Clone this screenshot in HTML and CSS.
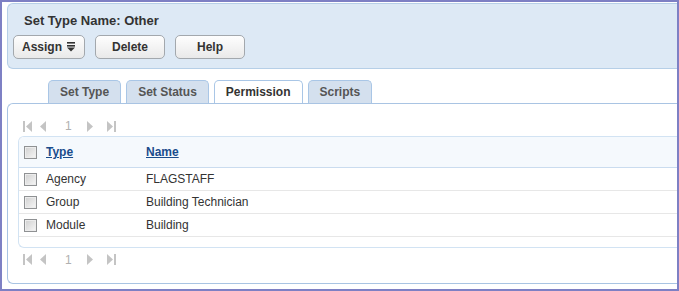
FILE: index.html
```html
<!DOCTYPE html>
<html lang="en">
<head>
    <meta charset="UTF-8">
    <title>Set Type - Permission</title>
    <link rel="stylesheet" href="styles.css">
</head>
<body>
    <div class="frame">
        <div class="header">
            <div class="title">Set Type Name: Other</div>
            <div class="actions">
                <button class="btn btn-menu">Assign
                    <svg width="8" height="10" viewBox="0 0 8 10"><rect x="0" y="0" width="8" height="1.6" fill="#333"/><rect x="0" y="3" width="8" height="1.6" fill="#333"/><polygon points="0,5.6 8,5.6 4,9.6" fill="#333"/></svg>
                </button>
                <button class="btn">Delete</button>
                <button class="btn">Help</button>
            </div>
        </div>

        <div class="tabs">
            <div class="tab">Set Type</div>
            <div class="tab">Set Status</div>
            <div class="tab active">Permission</div>
            <div class="tab">Scripts</div>
        </div>

        <div class="panel">
            <div class="pager">
                <svg class="pg-first" width="10" height="11" viewBox="0 0 10 11"><rect x="0" y="0" width="2" height="11" fill="#c4c4c4"/><polygon points="9,0 9,11 3,5.5" fill="#c4c4c4"/></svg>
                <svg class="pg-prev" width="8" height="11" viewBox="0 0 8 11"><polygon points="7,0 7,11 1,5.5" fill="#c4c4c4"/></svg>
                <span class="pg-num">1</span>
                <svg class="pg-next" width="8" height="11" viewBox="0 0 8 11"><polygon points="1,0 1,11 7,5.5" fill="#c4c4c4"/></svg>
                <svg class="pg-last" width="10" height="11" viewBox="0 0 10 11"><polygon points="1,0 1,11 7,5.5" fill="#c4c4c4"/><rect x="8" y="0" width="2" height="11" fill="#c4c4c4"/></svg>
            </div>

            <div class="grid">
                <div class="row head">
                    <div class="cell-check"><span class="check"></span></div>
                    <div class="cell-type"><a href="#">Type</a></div>
                    <div class="cell-name"><a href="#">Name</a></div>
                </div>
                <div class="row">
                    <div class="cell-check"><span class="check"></span></div>
                    <div class="cell-type">Agency</div>
                    <div class="cell-name">FLAGSTAFF</div>
                </div>
                <div class="row">
                    <div class="cell-check"><span class="check"></span></div>
                    <div class="cell-type">Group</div>
                    <div class="cell-name">Building Technician</div>
                </div>
                <div class="row">
                    <div class="cell-check"><span class="check"></span></div>
                    <div class="cell-type">Module</div>
                    <div class="cell-name">Building</div>
                </div>
                <div class="grid-foot"></div>
            </div>

            <div class="pager">
                <svg class="pg-first" width="10" height="11" viewBox="0 0 10 11"><rect x="0" y="0" width="2" height="11" fill="#c4c4c4"/><polygon points="9,0 9,11 3,5.5" fill="#c4c4c4"/></svg>
                <svg class="pg-prev" width="8" height="11" viewBox="0 0 8 11"><polygon points="7,0 7,11 1,5.5" fill="#c4c4c4"/></svg>
                <span class="pg-num">1</span>
                <svg class="pg-next" width="8" height="11" viewBox="0 0 8 11"><polygon points="1,0 1,11 7,5.5" fill="#c4c4c4"/></svg>
                <svg class="pg-last" width="10" height="11" viewBox="0 0 10 11"><polygon points="1,0 1,11 7,5.5" fill="#c4c4c4"/><rect x="8" y="0" width="2" height="11" fill="#c4c4c4"/></svg>
            </div>
        </div>
    </div>
</body>
</html>
```

FILE: styles.css
```css
body {
    margin: 0;
    font-family: "Liberation Sans", Arial, sans-serif;
    font-size: 12px;
    color: #333;
    background: #fff;
}
.frame {
    width: 679px;
    height: 291px;
    box-sizing: border-box;
    border: 2px solid #7e80c4;
    padding: 1px 0 0 5px;
    overflow: hidden;
    background: #fff;
}
.header {
    height: 66px;
    box-sizing: border-box;
    background: #dde9f5;
    border: 1px solid #b6cfe7;
    border-right: none;
    border-radius: 6px 0 0 6px;
    padding: 9px 0 0 5px;
}
.title {
    font-size: 13px;
    font-weight: bold;
    line-height: 16px;
    margin-left: 11px;
    color: #333;
}
.actions {
    display: flex;
    gap: 10px;
    margin-top: 6px;
}
.btn {
    height: 24px;
    width: 70px;
    box-sizing: border-box;
    border: 1px solid #a3a8ad;
    border-radius: 5px;
    background: linear-gradient(#fefefe, #e9e9e9);
    font-family: "Liberation Sans", Arial, sans-serif;
    font-size: 12px;
    font-weight: bold;
    color: #333;
    padding: 0;
    display: flex;
    align-items: center;
    justify-content: center;
}
.btn-menu {
    width: 72px;
    justify-content: flex-start;
    padding-left: 8px;
    gap: 5px;
}
.tabs {
    display: flex;
    gap: 5px;
    margin-top: 11px;
    padding-left: 41px;
}
.tab {
    height: 23px;
    box-sizing: border-box;
    line-height: 22px;
    padding: 0 11px;
    background: #d4e0ee;
    border: 1px solid #a9c6e6;
    border-bottom: none;
    border-radius: 5px 5px 0 0;
    font-weight: bold;
    color: #555;
}
.tab.active {
    background: #fff;
    color: #333;
}
.panel {
    height: 181px;
    box-sizing: border-box;
    border: 1px solid #a9c4e3;
    border-right: none;
    border-radius: 6px 0 0 6px;
    padding-left: 10px;
}
.pager {
    display: flex;
    align-items: center;
    height: 20px;
    margin-top: 12px;
    padding-left: 5px;
}
.grid + .pager {
    margin-top: 0;
    height: 23px;
}
.pg-prev {
    margin-left: 6px;
}
.pg-num {
    margin-left: 18px;
    width: 7px;
    color: #b0b0b0;
}
.pg-next {
    margin-left: 14px;
}
.pg-last {
    margin-left: 12px;
}
.grid {
    border-top: 1px solid #d2e3f3;
    border-left: 1px solid #d2e3f3;
    border-bottom: 1px solid #d2e3f3;
    border-radius: 6px 0 0 6px;
    overflow: hidden;
}
.row {
    display: flex;
    align-items: center;
    height: 23px;
    box-sizing: border-box;
    border-bottom: 1px solid #e7e7e7;
    color: #333;
}
.row.head {
    height: 31px;
    background: #f5f9fd;
    border-bottom: 1px solid #cadcef;
}
.row.head a {
    color: #1a4c8c;
    font-weight: bold;
    text-decoration: underline;
}
.cell-check {
    width: 27px;
    padding-left: 5px;
    box-sizing: border-box;
    display: flex;
    align-items: center;
}
.cell-type {
    width: 100px;
}
.check {
    display: block;
    width: 13px;
    height: 13px;
    box-sizing: border-box;
    border: 1px solid #8f9193;
    background: linear-gradient(135deg, #cfcfcf, #f7f7f7);
    box-shadow: inset 0 0 0 1px #ececec;
}
.grid-foot {
    height: 10px;
}
```
